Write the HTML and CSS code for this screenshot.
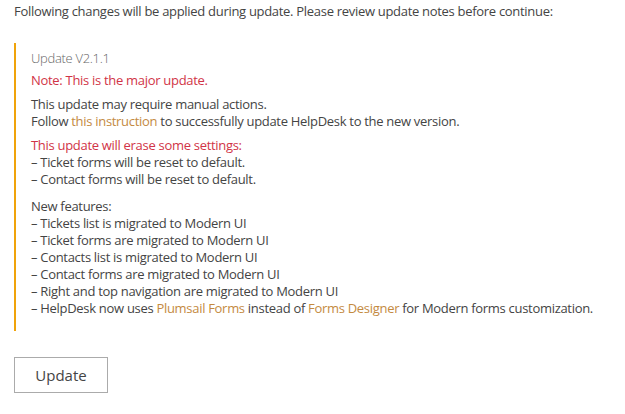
FILE: index.html
```html
<!DOCTYPE html>
<html lang="en">
<head>
<meta charset="utf-8">
<title>Update</title>
<link rel="stylesheet" href="styles.css">
</head>
<body>
<div class="page">
  <p class="intro">Following changes will be applied during update. Please review update notes before continue:</p>
  <div class="notes">
    <div class="version">Update V2.1.1</div>
    <p class="warn">Note: This is the major update.</p>
    <p>This update may require manual actions.<br>Follow <a href="#">this instruction</a> to successfully update HelpDesk to the new version.</p>
    <p><span class="warn">This update will erase some settings:</span><br>– Ticket forms will be reset to default.<br>– Contact forms will be reset to default.</p>
    <p class="features">New features:<br>– Tickets list is migrated to Modern UI<br>– Ticket forms are migrated to Modern UI<br>– Contacts list is migrated to Modern UI<br>– Contact forms are migrated to Modern UI<br>– Right and top navigation are migrated to Modern UI<br>– HelpDesk now uses <a href="#">Plumsail Forms</a> instead of <a href="#">Forms Designer</a> for Modern forms customization.</p>
  </div>
  <button class="btn" type="button">Update</button>
</div>
</body>
</html>
```
FILE: styles.css
```css
html, body {
  margin: 0;
  padding: 0;
  background: #fff;
}
body {
  font-family: "Open Sans", "Noto Sans", sans-serif;
  font-size: 13px;
  line-height: 17px;
  letter-spacing: -0.3px;
  color: #444;
}
.page {
  padding: 3px 14px 0 14px;
}
.intro {
  margin: 0;
}
.notes {
  margin-top: 23px;
  border-left: 2px solid #f0a30a;
  padding: 7px 0 14px 15px;
}
.version {
  color: #666;
  font-weight: 300;
  margin-bottom: 5px;
}
.notes p {
  margin: 0 0 7px 0;
}
.notes p.features {
  margin-top: 10px;
  margin-bottom: 0;
}
.warn {
  color: #d13447;
}
a {
  color: #c48a3f;
  text-decoration: none;
}
.btn {
  margin-top: 26px;
  width: 94px;
  height: 36px;
  background: #fff;
  border: 1px solid #ababab;
  font-family: "Open Sans", "Noto Sans", sans-serif;
  font-size: 15px;
  color: #444;
  padding: 0;
}
```
